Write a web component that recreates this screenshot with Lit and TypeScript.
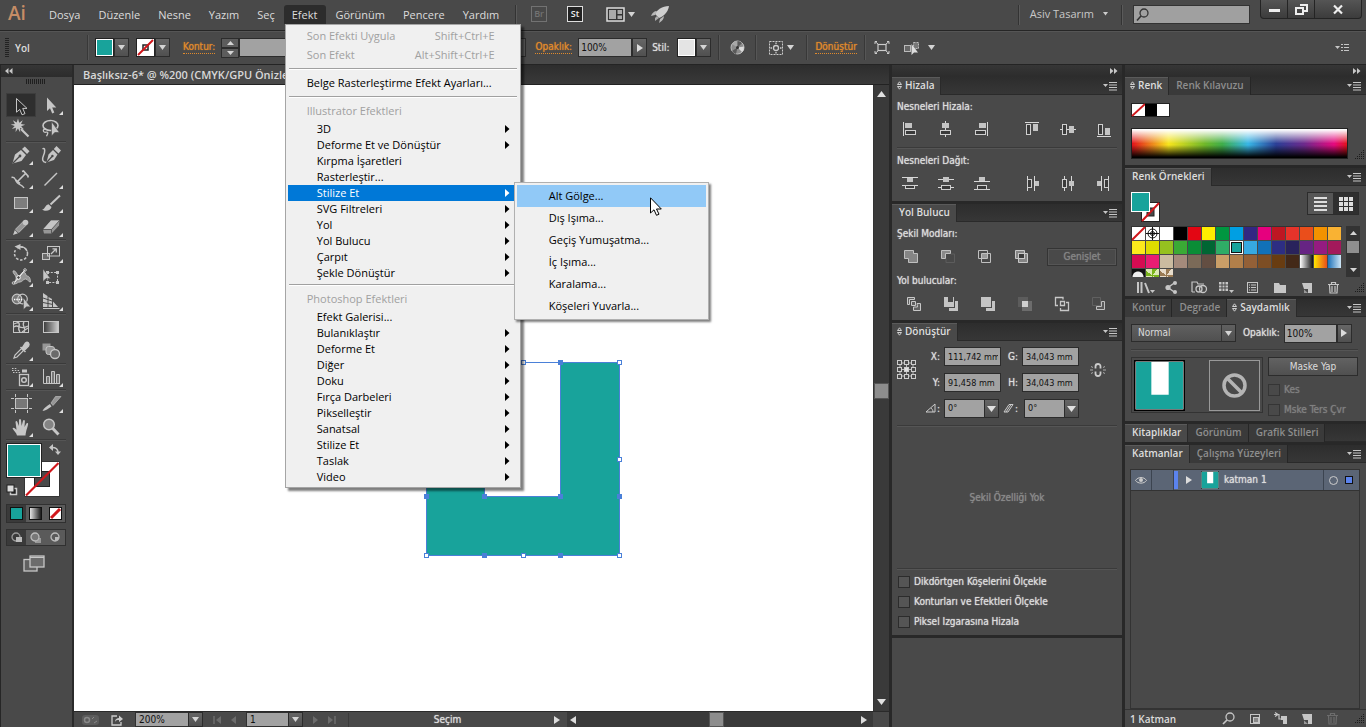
import { LitElement, html, svg, css, nothing, TemplateResult } from "lit";
import { customElement, property } from "lit/decorators.js";
import { classMap } from "lit/directives/class-map.js";

type Shape = TemplateResult | TemplateResult[];
const icon = (w: number, h: number, body: Shape) =>
  html`<svg class="ico" width=${w} height=${h} viewBox="0 0 ${w} ${h}" fill="none" stroke="none" aria-hidden="true">${body}</svg>`;

const L = "#c6c6c6";
const M = "#969696";
const TEAL = "#18a39b";

const down = () => icon(7, 5, svg`<path d="M0 0H7L3.5 5z" fill="#d4d4d4"/>`);
const up = () => icon(9, 6, svg`<path d="M0 6H9L4.5 0z" fill="#e0e0e0"/>`);
const downBig = () => icon(9, 6, svg`<path d="M0 0H9L4.5 6z" fill="#e0e0e0"/>`);
const right = () => icon(6, 8, svg`<path d="M0 0V8L6 4z" fill="#dcdcdc"/>`);
const left = () => icon(6, 8, svg`<path d="M6 0V8L0 4z" fill="#dcdcdc"/>`);
const menuArrow = () => icon(5, 8, svg`<path d="M0 0V8L4.5 4z" fill="currentColor"/>`);
const flyout = () =>
  icon(14, 9, svg`<path d="M0 2H5L2.5 5z" fill="${L}"/><path d="M6 .5H14M6 3H14M6 5.5H14M6 8H14" stroke="${L}"/>`);
const collapse = (dir: "l" | "r") =>
  dir === "l"
    ? icon(8, 6, svg`<path d="M3.5 0V6L0 3zM7.5 0V6L4 3z" fill="#c8c8c8"/>`)
    : icon(8, 6, svg`<path d="M0 0V6L3.5 3zM4 0V6L7.5 3z" fill="#c8c8c8"/>`);
const updown = () => icon(5, 9, svg`<path d="M.5 3.5L2.5 .8L4.5 3.5zM.5 5.5L2.5 8.2L4.5 5.5z" stroke="#d0d0d0"/>`);
const resizer = () =>
  icon(9, 9, svg`<path d="M8 .5h1M6 2.500h1m1 0h1M4 4.500h1m1 0h1m1 0h1M2 6.500h1m1 0h1m1 0h1m1 0h1M0 8.500h1m1 0h1m1 0h1m1 0h1m1 0h1" stroke="#1c1c1c"/>`);

/* ---- tool icons, 24 x 24 ---- */
const T: Record<string, Shape> = {
  select: svg`<path d="M7.5 4.5V18.2L10.8 15.4L13 20.8L16 19.6L13.7 14.4H18z" fill="#2b2b2b" stroke="${L}"/>`,
  direct: svg`<path d="M8 4.5V18L11 15.3L13.2 20.5L15.3 19.6L13.2 14.4H17.3z" fill="${L}"/>`,
  wand: svg`<path d="M9 1.5l1.2 4.2 3.6-2.4-1.8 3.8 4.2.6-4 1.6 2.8 3.2-4-1.4.2 4.4L9 11.4 6.6 15l.3-4.3-4 1.2 2.8-3-4-1.4 4.2-.6-2-3.6 3.8 2.3z" fill="${L}"/><path d="M12 12L19.5 19.5" stroke="${L}" stroke-width="2.2"/>`,
  lasso: svg`<ellipse cx="11.5" cy="8.5" rx="7.5" ry="5" stroke="${L}" stroke-width="1.6"/><path d="M7 12c-4-.5-3 4 0 3.2s1.500 2 .5 4" stroke="${L}" stroke-width="1.300"/><path d="M12.500 4.500V19l3.300-3.500h4.600z" fill="${L}" stroke="#484848" stroke-width=".6"/>`,
  pen: svg`<path d="M3.500 20.500L6 11.500L12 7L17 12L12.500 18z" fill="${L}"/><path d="M13 6L15.800 3.500L20.500 8.200L18 11z" fill="${L}"/><path d="M4 20L10.500 13.500" stroke="#484848" stroke-width="1.200"/><circle cx="11" cy="13" r="1.400" fill="#484848"/>`,
  curve: svg`<path d="M7.500 19.500L9.500 11.500L14 7L18.500 11.500L15 17z" fill="${L}"/><path d="M14.800 6L17.500 3L22 7.500L19.500 10.500z" fill="${L}"/><path d="M8 19L13 13.500" stroke="#484848" stroke-width="1.200"/><circle cx="13.400" cy="13" r="1.200" fill="#484848"/><path d="M3.500 6c3-2 2.500 3 1 6.500S3 19 7 19.500" stroke="${L}" stroke-width="1.500"/>`,
  type: svg`<path d="M2.500 10.500c4-1.500 3.500 3 6 5.500s4.500 1.500 6.500 5" stroke="${L}" stroke-width="1.400"/><path d="M8.500 14.500L16.500 6.500M13 4.500l1.500-.5L19 9v1.500M11 16.500l-4.500-3.500" stroke="${L}" stroke-width="1.700"/>`,
  line: svg`<path d="M5.500 18.500L18 6" stroke="${L}" stroke-width="1.500"/>`,
  rect: svg`<rect x="5.500" y="6.500" width="13" height="11" fill="#7d7d7d" stroke="${L}"/>`,
  brush: svg`<path d="M11.500 13.500L21 4.500" stroke="${L}" stroke-width="2"/><path d="M3 18.500c3 .2 3-4.500 6.500-5.200l3 2.700c-.5 3.500-6 5-9.500 2.500z" fill="${L}"/>`,
  pencil: svg`<path d="M4 20l1.800-5L9 18.300z" fill="${L}"/><path d="M6.500 14.200L14 6.700l3.300 3.300-7.500 7.500z" fill="${M}" stroke="${L}" stroke-width=".8"/><circle cx="16.500" cy="7.500" r="2.800" fill="${L}"/>`,
  eraser: svg`<path d="M4 14.500L12 5.500H20.500L20 10.500L12.500 18.500H5z" fill="${M}"/><path d="M4 14.500L12 5.500H20.500L12.500 14.500z" fill="${L}"/><path d="M4 14.500H12.500L20.500 5.500M12.500 14.500V18.500" stroke="#484848" stroke-width=".8"/>`,
  rotate: svg`<circle cx="12" cy="12.500" r="6.500" stroke="${L}" stroke-width="1.500" stroke-dasharray="2.600 1.600"/><path d="M5 8.500A7 7 0 0 1 12 6" stroke="#484848" stroke-width="3"/><path d="M10.500 6A6.600 6.600 0 0 1 18 10" stroke="${L}" stroke-width="1.500"/><path d="M5.500 5.500L11.500 3V9z" fill="${L}"/>`,
  scale: svg`<rect x="3.500" y="12.500" width="7" height="6" stroke="${L}" fill="#6a6a6a"/><rect x="8.500" y="5.500" width="12" height="9.500" stroke="${L}"/><path d="M12 13l5-5M13.500 7.800H17.300V11.500" stroke="${L}" stroke-width="1.300"/>`,
  width: svg`<path d="M4 6c3-1.500 4 5 6 5s2-4 4.500-4 2 4 3.500 4c2.500 0 3.500 3 3.500 6-2 .5-2.500-3-5-3s-3 3-5.500 3-3 2-6 2c0-3 3-4 2-7s-3-3-3-6z" fill="${M}" stroke="${L}" stroke-width=".8"/><path d="M5 18L16 5" stroke="#fff"/><circle cx="9.500" cy="12.500" r="1.800" fill="#484848" stroke="#fff"/><circle cx="16" cy="5" r="1.300" stroke="${L}"/><circle cx="4.500" cy="18" r="1.300" stroke="${L}"/>`,
  free: svg`<rect x="8.500" y="7.500" width="10" height="10" stroke="${L}" stroke-dasharray="2 1.300"/><path d="M7 6h3v3H7zM17 6h3v3h-3zM17 16h3v3h-3zM7 16h3v3H7z" fill="${L}"/><path d="M4 4V16.500l3-3h4.500z" fill="${L}" stroke="#484848" stroke-width=".5"/>`,
  shape: svg`<circle cx="8" cy="10" r="4.800" fill="#777" stroke="${L}" stroke-width="1.200"/><circle cx="13.500" cy="10" r="4.800" stroke="${L}" stroke-width="1.200"/><path d="M5 10.500H15" stroke="#fff" stroke-width="1.300" stroke-dasharray="1.300 1"/><path d="M14.500 9V20.500l3-2.700h4z" fill="${L}" stroke="#484848" stroke-width=".5"/>`,
  persp: svg`<path d="M4 4L8.500 7V18.500H4zM9.500 8L13 10V18.500H9.500zM14 12.500L19.500 18.500H14z" fill="${L}"/><path d="M4 9L13 12M4 13.500L14 15.500M4 18.500H20.500" stroke="#484848"/><path d="M4 19.500H20.500" stroke="${L}"/>`,
  mesh: svg`<rect x="4.500" y="6.500" width="15" height="11" stroke="${L}"/><path d="M5 12c4-4 6 4 14-1M9 7c4 3-2 6 2 10M15 7c-3 4 3 6 0 10M5 9l5-2M13 17l6-4" stroke="${L}" stroke-width="1.300"/>`,
  gradient: svg`<defs><linearGradient id="g"><stop offset="0" stop-color="#3a3a3a"/><stop offset="1" stop-color="#d0d0d0"/></linearGradient></defs><rect x="4.500" y="6.500" width="15" height="11" fill="url(#g)" stroke="${L}"/>`,
  dropper: svg`<path d="M5 19l1-3 6.500-6.500 2 2L8 18z" stroke="${L}" stroke-width="1.200"/><path d="M11.500 8L16.500 13M13 9.500L16.500 4c2-2 4.500.5 3 3l-4 4z" stroke="${L}" stroke-width="1.500" fill="${L}"/>`,
  blend: svg`<rect x="3.500" y="4.500" width="8" height="7" fill="${M}"/><rect x="7" y="7.500" width="8.500" height="8" rx="2.500" fill="${M}" stroke="#c6c6c6"/><circle cx="16" cy="15" r="4.500" fill="#6a6a6a" stroke="${L}" stroke-width="1.300"/>`,
  spray: svg`<rect x="10.500" y="9.500" width="9" height="11" stroke="${L}" stroke-width="1.300"/><rect x="13" y="4.500" width="5" height="3" fill="${L}"/><circle cx="15" cy="15" r="2.300" stroke="${L}" stroke-width="1.500"/><path d="M3 5.500h8M4 7.500h8M3 3.500h5" stroke="${L}" stroke-dasharray="1.500 1.300"/>`,
  graph: svg`<path d="M4.500 4V18.500H21" stroke="${L}"/><path d="M7.500 18V11.500h3V18M12.500 18V6.500h3V18M17.500 18V9.500h3V18" stroke="${L}" fill="#777"/>`,
  artboard: svg`<rect x="6.500" y="7.500" width="12" height="10" fill="#777" stroke="${L}"/><path d="M6.500 3V6M18.500 3V6M6.500 19V22M18.500 19V22M2 7.500H5M20 7.500h3M2 17.500H5M20 17.500h3" stroke="${L}"/>`,
  slice: svg`<path d="M3.500 20c1-3 4.500-5 7.500-7l1.500 2.500C9.500 17.500 6.500 20 3.500 20z" fill="${L}"/><path d="M12 12L16.500 5.500H22L14 14.500z" fill="${M}" stroke="${L}" stroke-width=".6"/>`,
  hand: svg`<path d="M8 20.500c-.5-3-3.500-4.500-4.500-7.200.8-1.200 2.200-.3 4 1.400L6.500 7c.2-1.200 1.500-1.200 1.900 0l1.500 4L10 5c.4-1.200 1.700-1.200 2 0l.6 6 1.400-5.300c.5-1 1.800-.8 1.900.3L15.500 12l2-3.500c.7-.8 1.800-.3 1.600.8-.8 4.200-2 5.500-2.600 11.200z" fill="${L}"/>`,
  zoom: svg`<circle cx="10" cy="9.500" r="5.300" fill="#848484" stroke="${L}" stroke-width="1.500"/><path d="M13.800 13.500L19.500 19.500" stroke="${L}" stroke-width="3"/>`,
};
const toolGroups: [string, string, boolean][][] = [
  [["select", "Seçim", false], ["direct", "Doğrudan Seçim", true], ["wand", "Sihirli Değnek", false], ["lasso", "Kement", false]],
  [["pen", "Kalem", true], ["curve", "Eğrilik", false], ["type", "Yazı", true], ["line", "Çizgi", true], ["rect", "Dikdörtgen", true], ["brush", "Boya Fırçası", true], ["pencil", "Kurşun Kalem", true], ["eraser", "Silgi", true]],
  [["rotate", "Döndür", true], ["scale", "Ölçekle", true], ["width", "Genişlik", true], ["free", "Serbest Dönüştür", false], ["shape", "Şekil Oluşturucu", true], ["persp", "Perspektif Izgara", true]],
  [["mesh", "Kafes", false], ["gradient", "Degrade", false], ["dropper", "Damlalık", true], ["blend", "Karışım", false]],
  [["spray", "Simge Püskürtücü", true], ["graph", "Sütun Grafik", true]],
  [["artboard", "Çalışma Yüzeyi", false], ["slice", "Dilim", true], ["hand", "El", true], ["zoom", "Yakınlaştır", false]],
];

/* ---- align and pathfinder icons, 16 x 16 ---- */
const box = (x: number, y: number, w: number, h: number) => svg`<rect x=${x + 0.5} y=${y + 0.5} width=${w - 1} height=${h - 1} fill="#3a3a3a" stroke="#cfcfcf"/>`;
const solid = (x: number, y: number, w: number, h: number, f = "#c4c4c4") => svg`<rect x=${x} y=${y} width=${w} height=${h} fill=${f}/>`;
const bar = (d: string) => svg`<path d=${d} stroke="#d8d8d8"/>`;
const alignIcons: Record<string, Shape> = {
  "Sola hizala": [bar("M1.500 1V15"), solid(3, 2, 7, 5), box(3, 9, 11, 5)],
  "Yatay ortala": [bar("M7.500 0V16"), solid(4, 2, 7, 5), box(2, 9, 11, 5)],
  "Sağa hizala": [bar("M13.500 1V15"), solid(5, 2, 7, 5), box(1, 9, 11, 5)],
  "Üste hizala": [bar("M1 1.500H15"), box(2, 3, 5, 11), solid(9, 3, 5, 7)],
  "Dikey ortala": [bar("M0 8.500H16"), box(2, 3, 5, 11), solid(9, 5, 5, 7)],
  "Alta hizala": [bar("M1 15.500H15"), box(2, 3, 5, 11), solid(9, 7, 5, 7)],
};
const distIcons: Record<string, Shape> = {
  "Üstten dağıt": [bar("M0 2.500H16M0 10.500H16"), solid(5, 3, 6, 4), box(3, 10, 10, 4)],
  "Dikey dağıt": [bar("M0 4.500H16M0 12.500H16"), solid(5, 2, 6, 5), box(3, 10, 10, 5)],
  "Alttan dağıt": [bar("M0 6.500H16M0 14.500H16"), solid(5, 2, 6, 4), box(3, 10, 10, 5)],
  "Soldan dağıt": [bar("M3.500 1V16M10.500 1V16"), box(3, 4, 5, 9), solid(11, 6, 4, 5)],
  "Yatay dağıt": [bar("M4.500 1V16M11.500 1V16"), box(2, 4, 5, 9), solid(9, 6, 5, 5)],
  "Sağdan dağıt": [bar("M5.500 1V16M12.500 1V16"), solid(1, 6, 4, 5), box(8, 4, 5, 9)],
};
const pfIcons: Record<string, Shape> = {
  "Birleştir": svg`<path d="M1.500 1.500h9v3h4v9h-9v-4h-4z" fill="#858585" stroke="#c0c0c0"/>`,
  "Ön tarafı çıkar": svg`<path d="M1.500 1.500h9v3h-5v5h-4z" fill="#8a8a8a" stroke="#c0c0c0"/><path d="M11 5h3.500v8.500H6V10" stroke="#5c5c5c"/>`,
  "Kesişim": svg`<path d="M1.500 1.500h9v8h-9zM4.500 4.500h9v9h-9z" stroke="#c0c0c0"/><rect x="5" y="5" width="5" height="4" fill="#9a9a9a"/>`,
  "Dışla": svg`<path d="M1.500 1.500h9v8h-9zM4.500 4.500h9v9h-9z" fill="#858585" stroke="#c8c8c8"/><rect x="4.500" y="4.500" width="6" height="5" fill="#3a3a3a" stroke="#c8c8c8"/>`,
};
const pfIcons2: Record<string, Shape> = {
  "Böl": svg`<path d="M1.500 1.500h7v2h-5v5h-2zM5.500 5.500h4v4h-4zM11 7.500h3.500v7h-7V11h4z" fill="#606060" stroke="#c8c8c8"/>`,
  "Kırp": svg`<path d="M1 1h4v5h5V1h1v10H1zM12 5h3v10H6v-3h6z" fill="#c4c4c4"/>`,
  "Kaynaştır": svg`<path d="M1 1h10v10H1zM12 5h3v10H6v-3h6z" fill="#c4c4c4"/>`,
  "Kesme": svg`<path d="M1 1h10v10H1z" fill="#5c5c5c"/><path d="M5 5h10v10H5z" fill="#6c6c6c"/><path d="M5 5h6v6H5z" fill="#d0d0d0"/>`,
  "Anahat": svg`<path d="M9 3.500V1.500H1.500V9.500H4M6.500 5.500h4v4h-4zM12 6.500h2.500v8h-8V12" stroke="#c8c8c8" stroke-width="1.300"/>`,
  "Alt eksi": svg`<path d="M1.500 1.500h8v8h-8z" stroke="#606060"/><path d="M10.500 5.500h3v8h-8v-3h5z" fill="#585858" stroke="#c0c0c0"/>`,
};

const effectItems = ["3D>", "Deforme Et ve Dönüştür>", "Kırpma İşaretleri", "Rasterleştir...", "Stilize Et>", "SVG Filtreleri>", "Yol>", "Yol Bulucu>", "Çarpıt>", "Şekle Dönüştür>"];
const psItems = ["Efekt Galerisi...", "Bulanıklaştır>", "Deforme Et>", "Diğer>", "Doku>", "Fırça Darbeleri>", "Pikselleştir>", "Sanatsal>", "Stilize Et>", "Taslak>", "Video>"];
const subItems = ["Alt Gölge...", "Dış Işıma...", "Geçiş Yumuşatma...", "İç Işıma...", "Karalama...", "Köşeleri Yuvarla..."];

const swatches = [
  "none", "reg", "#ffffff", "#000000", "#e30613", "#ffed00", "#009640", "#009fe3", "#312783", "#e6007e", "#be1622", "#e6332a", "#ea4e1b", "#f39200", "#f9b233",
  "#fcea1c", "#dedc00", "#95c11f", "#3aaa35", "#0a8d36", "#006633", "#2fac66", TEAL, "#36a9e1", "#1171b8", "#2d2e83", "#29235c", "#662483", "#951b81", "#a3195b",
  "#d60b52", "#e71d73", "#cbbba0", "#a48a7b", "#7b6a58", "#634e42", "#ca9e67", "#b17f4a", "#936037", "#7d4e24", "#683c11", "#432918", "bw", "sun", "sky",
  "dots", "leaf", "sand",
];

const reset = css`
  * { box-sizing: border-box; }
  button, input, select { font: inherit; color: inherit; margin: 0; padding: 0; border: 0; border-radius: 0; background: none; }
  button { display: inline-flex; align-items: center; justify-content: center; flex: none; }
  a { color: inherit; text-decoration: none; }
  ul { list-style: none; margin: 0; padding: 0; }
  .ico { display: block; flex: none; overflow: visible; }
`;
const fields = css`
  .field { height: 19px; min-width: 0; background: #a2a2a2; color: #111; border: 1px solid #2c2c2c; padding: 0 4px; font: 10px/17px "DejaVu Sans Condensed", sans-serif; }
  .sw { width: 19px; height: 19px; border: 1px solid #222; box-shadow: inset 0 0 0 1px #fff; }
  .dd { width: 15px; height: 19px; background: linear-gradient(#666, #505050); border: 1px solid #2c2c2c; }
  .pick { display: inline-grid; grid-template-columns: 1fr 15px; flex: none; }
  .pick select { grid-area: 1 / 1 / 2 / 3; appearance: none; width: 100%; }
  .pick .cap { grid-area: 1 / 2; pointer-events: none; display: flex; align-items: center; justify-content: center; background: linear-gradient(#666, #505050); border: 1px solid #2c2c2c; }
  .tah { font: 10px/14px "DejaVu Sans Condensed", sans-serif; text-shadow: 0 0 1px currentColor; color: #dcdcdc; }
`;
const noneMark = () => html`<svg class="ico" width="19" height="19" viewBox="0 0 19 19" aria-hidden="true"><rect width="19" height="19" fill="#222"/><rect x="1" y="1" width="17" height="17" fill="#fff"/><rect x="7" y="7" width="5" height="5" fill="#fff" stroke="#222" stroke-width="1.500"/><path d="M2 17L17 2" stroke="#d0161b" stroke-width="2"/></svg>`;

@customElement("effect-menu")
class EffectMenu extends LitElement {
  static styles = [reset, css`
    :host { display: block; font: 11px/16px "Open Sans", sans-serif; color: #000; }
    .menu { background: #f0f0f0; border: 1px solid #a5a5a5; padding: 2px; box-shadow: 3px 3px 2px rgba(0, 0, 0, .5); width: 236px; }
    .row { display: flex; align-items: center; height: 19px; padding: 0 23px 2px 19px; white-space: nowrap; }
    .row button { flex: 1; justify-content: space-between; height: 100%; }
    .off { color: #a0a0a0; }
    .item { position: relative; height: 16px; padding: 0 8px 0 29px; }
    .on { background: #0078d7; color: #fff; }
    .sep { height: 2px; margin: 3px 1px 4px; border-top: 1px solid #a0a0a0; background: #fff; }
    .sub { position: absolute; left: calc(100% - 4px); top: -3px; width: 195px; color: #000; background: #f0f0f0; border: 1px solid #b0b0b0; padding: 2px; box-shadow: 2px 2px 2px rgba(0, 0, 0, .5); }
    .leaf { display: flex; height: 22px; padding-left: 32px; }
    .leaf button { flex: 1; justify-content: flex-start; }
    .hot { background: #91c9f7; }
  `];
  private item = (label: string, open = false) => html`<li class=${classMap({ row: true, item: true, on: open })} role="none">
      <button role="menuitem">${label.replace(">", "")}${label.endsWith(">") ? menuArrow() : nothing}</button>
      ${open ? html`<ul class="sub" role="menu">${subItems.map((s, i) => html`<li class=${classMap({ leaf: true, hot: i === 0 })} role="none"><button role="menuitem">${s}</button></li>`)}</ul>` : nothing}
    </li>`;
  render() {
    return html`<ul class="menu" role="menu">
      <li class="row off"><button role="menuitem" disabled class="off"><span>Son Efekti Uygula</span><span>Shift+Ctrl+E</span></button></li>
      <li class="row off"><button role="menuitem" disabled class="off"><span>Son Efekt</span><span>Alt+Shift+Ctrl+E</span></button></li>
      <li class="sep" role="separator"></li>
      <li class="row"><button role="menuitem">Belge Rasterleştirme Efekt Ayarları...</button></li>
      <li class="sep" role="separator"></li>
      <li class="row off">Illustrator Efektleri</li>
      ${effectItems.map((t, i) => this.item(t, i === 4))}
      <li class="sep" role="separator"></li>
      <li class="row off">Photoshop Efektleri</li>
      ${psItems.map((t) => this.item(t))}
    </ul>`;
  }
}

@customElement("title-bar")
class TitleBar extends LitElement {
  static styles = [reset, css`
    :host { display: flex; height: 30px; background: #494949; color: #dcdcdc; font: 11px/18px "Open Sans", sans-serif; }
    .logo { width: 40px; padding-left: 8px; font: 600 19px/27px "Open Sans", sans-serif; color: #c68d66; }
    .menus { display: flex; padding-top: 5px; height: 24px; margin-right: 7px; }
    .top { position: relative; }
    .top > button { height: 19px; padding: 0 9px; }
    .open > button { background: #2c2c2c; border-radius: 3px 3px 0 0; padding: 0 9px 0 8px; }
    .drop { position: absolute; z-index: 5; left: 1px; top: 19px; }
    .rule { width: 1px; height: 20px; margin-top: 5px; background: #333; box-shadow: 1px 0 #5a5a5a; flex: none; }
    .apps { display: flex; align-items: center; height: 28px; padding-left: 15px; }
    .app { width: 16px; height: 16px; border: 1px solid #727272; color: #727272; font: 600 9px/12px "Open Sans", sans-serif; margin-right: 20px; }
    .st { color: #eee; border-color: #ddd; background: #222; margin-right: 23px; }
    .arr { display: flex; gap: 3px; align-items: center; margin-right: 16px; }
    .end { margin-left: auto; display: flex; }
    .user { display: flex; align-items: center; height: 28px; gap: 9px; padding: 0 13px 0 11px; color: #c8c8c8; }
    .find { display: flex; align-items: center; width: 117px; height: 19px; margin: 5px 10px 0 11px; background: #a0a0a0; border: 1px solid #333; padding-left: 2px; }
    .find input { min-width: 0; flex: 1; height: 17px; outline: none; }
    .win { display: flex; height: 19px; margin-right: 4px; background: linear-gradient(#555, #3c3c3c); border: 1px solid #242424; border-top: 0; border-radius: 0 0 4px 4px; }
    .win button { width: 27px; border-right: 1px solid #242424; }
    .win button:last-child { width: 46px; border-right: 0; }
  `];
  render() {
    const names = ["Dosya", "Düzenle", "Nesne", "Yazım", "Seç", "Efekt", "Görünüm", "Pencere", "Yardım"];
    return html`
      <div class="logo">Ai</div>
      <nav class="menus" aria-label="Menü">${names.map((n) => html`<div class=${classMap({ top: true, open: n === "Efekt" })}>
        <button>${n}</button>${n === "Efekt" ? html`<effect-menu class="drop"></effect-menu>` : nothing}</div>`)}</nav>
      <span class="rule"></span>
      <div class="apps">
        <button class="app">Br</button><button class="app st">St</button>
        <button class="arr" aria-label="Belgeleri düzenle">${icon(19, 15, svg`<rect x="1" y="1" width="17" height="13" fill="#333" stroke="#ddd" stroke-width="1.500"/><path d="M3 3h7v9H3zM11.500 3H16v4h-4.500zM11.500 8.500H16V12h-4.500z" fill="#aaa"/>`)}${down()}</button>
        <button aria-label="GPU performansı">${icon(18, 17, svg`<path d="M18 0C11 0 6 4 4 8l4 4c5-2 9-6 10-12z" fill="#cfcfcf"/><path d="M6 5C3 5 1 7 0 10l4-1zM13 10c0 3-2 5-5 7l1-4z" fill="#b8b8b8"/><path d="M4 12l2-2 2 2-4 3z" fill="#aaa"/>`)}</button>
      </div>
      <div class="end">
        <span class="rule"></span>
        <button class="user">Asiv Tasarım ${icon(5, 4, svg`<path d="M0 0H5L2.500 3.500z" fill="#ccc"/>`)}</button>
        <span class="rule"></span>
        <label class="find" aria-label="Ara">${icon(14, 14, svg`<circle cx="8" cy="5" r="4" stroke="#333" stroke-width="1.300"/><path d="M5 8L1 12.500" stroke="#333" stroke-width="1.600"/>`)}<input type="search" aria-label="Ara" /></label>
        <div class="win">
          <button aria-label="Küçült">${icon(11, 3, svg`<path d="M0 2.500H11" stroke="#eee" stroke-width="3"/>`)}</button>
          <button aria-label="Geri yükle">${icon(13, 11, svg`<path d="M5 1h7v6H9" stroke="#eee" stroke-width="2"/><rect x="1" y="4" width="7" height="6" stroke="#eee" stroke-width="2"/>`)}</button>
          <button aria-label="Kapat">${icon(10, 9, svg`<path d="M1 .5L9 8.500M9 .5L1 8.500" stroke="#eee" stroke-width="2.200"/>`)}</button>
        </div>
      </div>`;
  }
}

@customElement("control-bar")
class ControlBar extends LitElement {
  static styles = [reset, fields, css`
    :host { display: flex; align-items: center; height: 35px; padding: 0 17px 0 5px; background: #494949; border-top: 1px solid #262626; border-bottom: 1px solid #242424; box-shadow: inset 0 1px #555; }
    .grip { width: 4px; height: 20px; background: repeating-linear-gradient(#222 0 1px, #494949 1px 2px); }
    .kind { width: 78px; padding-left: 6px; font: 600 10px/14px "Open Sans", sans-serif; text-shadow: none; }
    .rule { width: 1px; height: 25px; background: #383838; box-shadow: 1px 0 #565656; flex: none; }
    .pair { display: flex; margin-left: 7px; }
    .link { color: #e08a2c; border-bottom: 1px dotted #e08a2c; line-height: 12px; white-space: nowrap; }
    .stroke { margin-left: 13px; }
    .step { display: flex; flex-direction: column; margin-left: 6px; }
    .step button { width: 18px; height: 10px; background: #5c5c5c; border: 1px solid #2c2c2c; }
    .weight { width: 60px; }
    .prof { width: 98px; height: 19px; margin-left: 8px; background: #5a5a5a; border: 1px solid #2c2c2c; }
    .opac { margin-left: 9px; }
    .pct { width: 54px; margin-left: 6px; padding: 0 2px; }
    .stil { margin: 0 8px 0 5px; }
    .plain { background: #e4e4e4; }
    .wheel { margin: 0 10px 0 11px; }
    .sim { margin: 0 12px 0 13px; gap: 4px; }
    .tr { margin: 0 7px 0 8px; }
    .iso { margin: 0 15px 0 10px; }
    .pic { gap: 8px; }
    .fly { margin-left: auto; }
  `];
  render() {
    return html`
      <span class="grip"></span><span class="tah kind">Yol</span><span class="rule"></span>
      <span class="pair"><button class="sw" style="background:${TEAL}" aria-label="Dolgu"></button><button class="dd" aria-label="Dolgu listesi">${down()}</button></span>
      <span class="pair"><button aria-label="Kontur rengi">${noneMark()}</button><button class="dd" aria-label="Kontur listesi">${down()}</button></span>
      <a class="tah link stroke" href="#">Kontur:</a>
      <span class="step"><button aria-label="Artır">${down4("u")}</button><button aria-label="Azalt">${down4("d")}</button></span>
      <input class="field weight" aria-label="Kontur kalınlığı" /><button class="dd" aria-label="Kalınlıklar">${down()}</button>
      <button class="prof" aria-label="Değişken genişlik"></button><button class="prof" aria-label="Fırça tanımı"></button>
      <a class="tah link opac" href="#">Opaklık:</a>
      <input class="field pct" value="100%" aria-label="Opaklık" /><button class="dd" aria-label="Opaklık kaydırıcısı">${right()}</button>
      <span class="tah stil">Stil:</span><button class="sw plain" aria-label="Stil"></button><button class="dd" aria-label="Stiller">${down()}</button>
      <span class="rule pair"></span>
      <button class="wheel" aria-label="Yeniden renklendir">${icon(15, 15, svg`<circle cx="7.500" cy="7.500" r="6.500" fill="#8d8d8d" stroke="#bdbdbd"/><path d="M7.500 7.500V1A6.500 6.500 0 0 0 2 4z" fill="#a8a8a8"/><path d="M7.500 7.500L14 6.500A6.500 6.500 0 0 1 12 12z" fill="#dcdcdc"/><path d="M7.500 7.500L2 11a6.500 6.500 0 0 0 4 3zM7.500 7.500V1A6.500 6.500 0 0 1 12 3z" fill="#5a5a5a"/><circle cx="7.500" cy="7.500" r="1.500" fill="#333"/>`)}</button>
      <span class="rule"></span>
      <button class="sim" aria-label="Tuvale hizala">${icon(14, 14, svg`<rect x=".5" y=".5" width="13" height="13" stroke="#ccc" stroke-dasharray="2 1"/><circle cx="7" cy="7" r="2.500" stroke="#ccc" stroke-width="1.300"/><path d="M7 1.500V3M7 11v1.500M1.500 7H3M11 7h1.500" stroke="#ccc" stroke-width="1.300"/>`)}${down()}</button>
      <span class="rule"></span>
      <a class="tah link tr" href="#">Dönüştür</a>
      <span class="rule"></span>
      <button class="iso" aria-label="Yalıt">${icon(14, 13, svg`<rect x="3" y="3.500" width="8" height="6" stroke="#ccc" stroke-width="1.200"/><path d="M0 .5L3 3M14 .5L11 3M0 12.500L3 10M14 12.500L11 10M0 3V.5H2M12 .5h2V3M0 10v2.500h2M12 12.500h2V10" stroke="#ccc"/>`)}</button>
      <button class="pic" aria-label="Benzer nesneleri seç">${icon(16, 14, svg`<rect x=".5" y="4.500" width="6" height="6" fill="#666" stroke="#bbb"/><rect x="9.500" y="1.500" width="5" height="6" fill="#777" stroke="#bbb" stroke-dasharray="2 1"/><path d="M7.500 3V14l2.500-2.500H14z" fill="#ddd"/>`)}${down()}</button>
      <button class="fly" aria-label="Panel menüsü">${icon(14, 9, svg`<path d="M0 3H5L2.500 6z" fill="${L}"/><path d="M6 1.500H8M9 1.500h5M6 4.500H8M9 4.500h5M6 7.500H8M9 7.500h5" stroke="${L}"/>`)}</button>`;
  }
}
function down4(d: "u" | "d") {
  return icon(7, 4, d === "u" ? svg`<path d="M0 4H7L3.500 0z" fill="#d4d4d4"/>` : svg`<path d="M0 0H7L3.500 4z" fill="#d4d4d4"/>`);
}

@customElement("tool-box")
class ToolBox extends LitElement {
  static styles = [reset, css`
    :host { display: block; background: #494949; border-left: 1px solid #262626; border-right: 2px solid #2a2a2a; }
    .strip { height: 12px; padding: 3px 4px; background: linear-gradient(#363636, #2c2c2c); }
    .grip { width: 20px; height: 5px; margin: 2px 0 9px 25px; background: repeating-linear-gradient(90deg, #1f1f1f 0 1px, #494949 1px 2px); }
    .group { display: grid; grid-template-columns: repeat(2, 30px); width: 60px; margin: 0 0 1px 5px; border-bottom: 1px solid #3a3a3a; box-shadow: 0 1px #555; }
    .tool { width: 30px; height: 24px; display: grid; grid-template-columns: 3px 24px 3px; }
    .tool .ico { grid-area: 1 / 2; }
    .tool .more { grid-area: 1 / 2; align-self: end; justify-self: end; margin-bottom: 2px; }
    .active { background: #2e2e2e; width: 28px; height: 22px; margin: 1px; box-shadow: 0 0 0 1px #3d3d3d; grid-template-columns: 2px 24px 2px; }
    .paint { margin: 2px 0 6px 5px; }
    .modes { display: grid; grid-template-columns: repeat(3, 1fr); width: 60px; height: 19px; margin: 0 0 6px 5px; background: #5a5a5a; border: 1px solid #303030; }
    .modes.low { height: 17px; margin-bottom: 9px; }
    .modes button:first-child { background: #3a3a3a; }
    .screen { margin-left: 22px; }
  `];
  render() {
    return html`
      <div class="strip">${collapse("l")}</div><div class="grip"></div>
      ${toolGroups.map((g) => html`<div class="group">${g.map(([k, label, more]) => html`
        <button class=${classMap({ tool: true, active: k === "select" })} aria-label=${label}>${icon(24, 24, T[k])}${more ? html`<svg class="ico more" width="4" height="4" viewBox="0 0 4 4" aria-hidden="true"><path d="M4 0V4H0z" fill="#ddd"/></svg>` : nothing}</button>`)}</div>`)}
      <button class="paint" aria-label="Dolgu ve kontur">${icon(60, 55, svg`
        <rect x="18.500" y="18.500" width="35" height="35" fill="#222"/><rect x="19" y="19" width="34" height="34" fill="#fff"/><rect x="28.500" y="28.500" width="15" height="15" fill="#494949" stroke="#222"/><path d="M20 52.500L52.500 20" stroke="#d0161b" stroke-width="2.200"/>
        <rect width="36" height="35" fill="#222"/><rect x="1" y="1" width="34" height="33" fill="#fff"/><rect x="2" y="2" width="32" height="31" fill="${TEAL}"/>
        <path d="M46 4.500c4 0 6 1.500 6 5" stroke="${L}" stroke-width="1.500"/><path d="M43 4.500L47 1V8zM49 8.500h6L52 12z" fill="${L}"/>
        <rect x="4.500" y="45.500" width="6" height="6" fill="#222" stroke="#ccc" stroke-width="1.500"/><rect x="1" y="42" width="7" height="7" fill="#ddd" stroke="#222"/>`)}</button>
      <div class="modes">
        <button aria-label="Renk">${icon(13, 13, svg`<rect x=".5" y=".5" width="12" height="12" fill="${TEAL}" stroke="#111"/>`)}</button>
        <button aria-label="Degrade">${icon(13, 13, svg`<defs><linearGradient id="m"><stop offset="0" stop-color="#eee"/><stop offset="1" stop-color="#111"/></linearGradient></defs><rect x=".5" y=".5" width="12" height="12" fill="url(#m)" stroke="#111"/>`)}</button>
        <button aria-label="Yok">${icon(13, 13, svg`<rect x=".5" y=".5" width="12" height="12" fill="#fff" stroke="#111"/><path d="M2 11L11 2" stroke="#d0161b" stroke-width="3"/>`)}</button>
      </div>
      <div class="modes low">
        <button aria-label="Normal çiz">${icon(11, 11, svg`<circle cx="5" cy="5" r="4" stroke="#999" stroke-width="1.300"/><rect x="5" y="5" width="6" height="5" fill="#bbb"/>`)}</button>
        <button aria-label="Arkaya çiz">${icon(11, 11, svg`<rect x="5" y="6" width="6" height="5" fill="#999"/><circle cx="5" cy="5" r="4" fill="#777" stroke="#bbb" stroke-width="1.300"/>`)}</button>
        <button aria-label="İçe çiz">${icon(11, 11, svg`<circle cx="5" cy="5" r="4" stroke="#bbb" stroke-width="1.300"/><path d="M5 5h4a4 4 0 0 1-4 4z" fill="#bbb"/>`)}</button>
      </div>
      <button class="screen" aria-label="Ekran modu">${icon(22, 17, svg`<rect x="1" y="4.500" width="13" height="11.500" fill="#606060" stroke="${L}" stroke-width="1.300"/><rect x="7" y="1" width="14" height="11" fill="#6c6c6c" stroke="${L}" stroke-width="1.300"/><path d="M7 2.500H21" stroke="${L}"/>`)}</button>`;
  }
}

@customElement("document-view")
class DocumentView extends LitElement {
  static styles = [reset, fields, css`
    :host { display: grid; grid-template: 20px minmax(0, 1fr) 16px / minmax(0, 1fr) 16px; background: #494949; }
    .tabs { grid-column: 1 / 3; background: linear-gradient(#2d2d2d, #393939); border-bottom: 1px solid #222; }
    .tab { width: 360px; max-width: 100%; height: 19px; padding-left: 9px; background: #494949; color: #d8d8d8; font: 600 11px/19px "Open Sans", sans-serif; }
    .canvas { position: relative; overflow: hidden; background: #fff; }
    .art { position: absolute; left: 345px; top: 270px; }
    .vs { display: flex; flex-direction: column; align-items: center; justify-content: space-between; padding: 6px 0; background: #3a3a3a; border-left: 1px solid #333; }
    .vt { width: 15px; height: 16px; background: #8d8d8d; margin-bottom: 14px; border: 1px solid #555; }
    .status { display: flex; align-items: center; background: #494949; border-top: 1px solid #2a2a2a; grid-column: 1 / 3; overflow: hidden; }
    .zoom { width: 68px; }
    .page { width: 57px; }
    .st { color: #111; background: #a2a2a2; border: 1px solid #303030; height: 15px; padding-left: 3px; font: 10px/14px "DejaVu Sans Condensed", sans-serif; }
    .cap { height: 15px; }
    .cloud { margin: 0 11px 0 7px; }
    .share { margin-right: 12px; }
    .nav { display: flex; gap: 10px; padding: 0 10px; }
    .mode { flex: none; width: 198px; text-align: center; border-left: 1px solid #3a3a3a; margin: 0 8px 0 2px; }
    .hs { flex: 1; display: flex; align-items: center; justify-content: space-between; height: 15px; margin-left: 7px; margin-right: 16px; padding: 0 6px 0 3px; background: #3a3a3a; }
    .ht { width: 15px; height: 15px; background: #8d8d8d; border: 1px solid #555; margin-right: 5px; }
  `];
  render() {
    const hollow = [[97, 0], [193, 0], [193, 97], [193, 193], [97, 193], [0, 193], [0, 0], [0, 97]];
    const full = [[134, 0], [193, 134], [134, 193], [58, 193], [0, 134], [58, 134], [134, 134], [58, 0]];
    const dim = "#6c6c6c";
    return html`
      <div class="tabs"><div class="tab">Başlıksız-6* @ %200 (CMYK/GPU Önizle</div></div>
      <div class="canvas"><svg class="ico art" width="210" height="210" viewBox="-7.500 -7.500 210 210" role="img" aria-label="Çizim">
        <path d="M0 0H58V134H134V0H193V193H0z" fill="${TEAL}" stroke="#4a80d8"/><path d="M0 0H193" stroke="#4a80d8" />
        ${hollow.map(([x, y]) => svg`<rect x=${x - 2} y=${y - 2} width="4" height="4" fill="#fff" stroke="#4a80d8"/>`)}
        ${full.map(([x, y]) => svg`<rect x=${x - 2} y=${y - 2} width="4" height="4" fill="#4a80d8" stroke="#4a80d8"/>`)}
      </svg></div>
      <div class="vs">${up()}<span class="vt"></span>${downBig()}</div>
      <div class="status">
        <span class="cloud">${icon(19, 12, svg`<rect x="1" y="1" width="17" height="10" rx="3" fill="#5c5c5c"/><circle cx="6" cy="6" r="2.500" stroke="#888" stroke-width="1.500"/><path d="M11 5l2-2M13 9l3-2" stroke="#888"/>`)}</span>
        <button class="share" aria-label="Paylaş">${icon(12, 12, svg`<path d="M6 2H1v9h9V8" stroke="#ccc" stroke-width="1.300"/><path d="M4 8c0-3 2-4 4-4V1.500L12 5 8 8V6c-2 0-3 0-4 2z" fill="#ccc"/>`)}</button>
        <span class="pick zoom"><select class="st" aria-label="Yakınlaştırma"><option>200%</option></select><span class="cap">${down()}</span></span>
        <span class="nav">${icon(8, 8, svg`<path d="M1 0V8" stroke="${dim}" stroke-width="1.500"/><path d="M8 0V8L3 4z" fill="${dim}"/>`)}${icon(5, 8, svg`<path d="M5 0V8L0 4z" fill="${dim}"/>`)}</span>
        <span class="pick page"><select class="st" aria-label="Çalışma yüzeyi"><option>1</option></select><span class="cap">${down()}</span></span>
        <span class="nav">${icon(5, 8, svg`<path d="M0 0V8L5 4z" fill="${dim}"/>`)}${icon(8, 8, svg`<path d="M7 0V8" stroke="${dim}" stroke-width="1.500"/><path d="M0 0V8L5 4z" fill="${dim}"/>`)}</span>
        <span class="tah mode">Seçim</span>
        <button aria-label="Durum menüsü">${right()}</button>
        <div class="hs">${left()}<span class="ht"></span>${right()}</div>
      </div>`;
  }
}

@customElement("panel-tabs")
class PanelTabs extends LitElement {
  @property({ attribute: false }) names: string[] = [];
  @property({ type: Number }) active = 0;
  @property({ type: Boolean }) arrow = false;
  @property({ type: Boolean }) nomenu = false;
  static styles = [reset, css`
    :host { display: flex; height: 18px; background: linear-gradient(#2d2d2d, #373737); box-shadow: inset 0 -1px #2a2a2a; }
    .tab { gap: 3px; height: 18px; padding: 0 6px 1px 7px; font: 600 10px/17px "Open Sans", sans-serif; color: #8e8e8e; background: #3a3a3a; border-right: 1px solid #262626; }
    .cur { background: #494949; color: #dedede; border-right-color: #2a2a2a; box-shadow: inset 0 1px #5a5a5a; }
    .fly { margin: 0 5px 0 auto; }
    .arr { padding-left: 5px; }
  `];
  render() {
    return html`${this.names.map((n, i) => html`<button role="tab" class=${classMap({ tab: true, cur: i === this.active, arr: i === this.active && this.arrow })}>${i === this.active && this.arrow ? updown() : nothing}${n}</button>`)}
      ${this.nomenu ? nothing : html`<button class="fly" aria-label="Panel menüsü">${flyout()}</button>`}`;
  }
}

@customElement("dock-left")
class DockLeft extends LitElement {
  static styles = [reset, fields, css`
    :host { display: flex; flex-direction: column; background: #494949; border-left: 3px solid #282828; border-right: 3px solid #282828; }
    .strip { height: 12px; flex: none; padding: 3px 4px; background: linear-gradient(#363636, #2c2c2c); display: flex; justify-content: flex-end; }
    .panel { border-bottom: 3px solid #282828; }
    .title { padding: 5px 5px 0; height: 22px; }
    .six { display: grid; grid-template-columns: repeat(3, 36px) 14px repeat(3, 36px); height: 24px; margin-bottom: 6px; }
    .six button:nth-child(4) { grid-column: 5; }
    .line { margin: 0 5px; height: 1px; background: #3a3a3a; box-shadow: 0 1px #555; }
    .align .line { margin-bottom: 1px; }
    .modes { display: flex; align-items: center; height: 25px; }
    .modes button { width: 37px; }
    .modes .expand { width: 70px; height: 18px; margin-left: auto; margin-right: 5px; border: 1px solid #343434; color: #858585; box-shadow: inset 0 0 0 1px #555; }
    .finders { display: grid; grid-template-columns: repeat(6, 37px); height: 26px; margin: 0 0 3px 3px; }
    .xf { display: grid; grid-template-columns: 20px 27px 57px 21px 57px 1fr; row-gap: 7px; padding: 6px 6px 7px 5px; align-items: center; }
    .ref { grid-area: 1 / 1 / 3 / 2; }
    .chain { grid-area: 1 / 6 / 3 / 7; justify-self: center; }
    .xf .lab { justify-self: end; padding-right: 4px; display: flex; align-items: center; gap: 1px; }
    .xf .c2 { grid-column: 2; }
    .xf .field { width: 57px; padding: 0 2px 0 3px; font-size: 9px; }
    .xf .pick, .xf .pick .field { width: 55px; }
    .xf .r { justify-self: end; }
    .empty { height: 142px; padding-top: 65px; text-align: center; color: #8a8a8a; }
    .checks { padding: 3px 6px 3px; display: grid; }
    .check { display: flex; align-items: center; height: 20px; gap: 4px; }
    .check input { appearance: none; width: 12px; height: 12px; background: #555; border: 1px solid #2c2c2c; }
  `];
  render() {
    const btns = (set: Record<string, Shape>, s = 16) => Object.entries(set).map(([k, v]) => html`<button aria-label=${k}>${icon(s, s, v)}</button>`);
    const ref = [1, 8, 15].flatMap((y) => [1, 8, 15].map((x) => [x, y]));
    return html`
      <div class="strip">${collapse("r")}</div>
      <section class="panel"><panel-tabs .names=${["Hizala"]} arrow></panel-tabs>
        <div class="align">
          <div class="tah title">Nesneleri Hizala:</div><div class="six">${btns(alignIcons)}</div>
          <div class="line"></div>
          <div class="tah title">Nesneleri Dağıt:</div><div class="six">${btns(distIcons)}</div>
        </div>
      </section>
      <section class="panel"><panel-tabs .names=${["Yol Bulucu"]}></panel-tabs>
        <div class="tah title">Şekil Modları:</div>
        <div class="modes">${btns(pfIcons)}<button class="tah expand" disabled>Genişlet</button></div>
        <div class="tah title">Yol bulucular:</div>
        <div class="finders">${btns(pfIcons2)}</div>
      </section>
      <section class="panel"><panel-tabs .names=${["Dönüştür"]} arrow></panel-tabs>
        <div class="xf tah">
          <span class="ref">${icon(19, 19, svg`<path d="M3 3H16V16H3zM3 9.500H16M9.500 3V16" stroke="#bbb"/>${ref.map(([x, y]) => svg`<rect x=${x - 0.5} y=${y - 0.5} width="4" height="4" fill=${x === 8 && y === 8 ? "#ddd" : "#494949"} stroke="#ccc"/>`)}`)}</span>
          <label class="lab" for="x">X:</label><input class="field" id="x" value="111,742 mm" />
          <label class="lab" for="g">G:</label><input class="field" id="g" value="34,043 mm" />
          <button class="chain" aria-label="Oranları koru">${icon(16, 16, svg`<path d="M5.500 6.500V4.500a2.500 2.500 0 0 1 5 0V6.500M5.500 9.500v2a2.500 2.500 0 0 0 5 0V9.500" stroke="#ccc" stroke-width="1.800"/><path d="M1 4.500l2 1M0 8h3M1 11.500l2-1M15 4.500l-2 1M16 8h-3M15 11.500l-2-1" stroke="#aaa"/>`)}</button>
          <label class="lab c2" for="y">Y:</label><input class="field" id="y" value="91,458 mm" />
          <label class="lab" for="h">H:</label><input class="field" id="h" value="34,043 mm" />
          <label class="lab c2" for="a" aria-label="Döndür">${icon(11, 9, svg`<path d="M10 0L1 8H10zM6 4c1 1 2 2 2 4" stroke="#ccc"/>`)}:</label>
          <span class="pick"><select class="field" id="a"><option>0°</option></select><span class="cap">${downBig()}</span></span>
          <label class="lab" for="s" aria-label="Yamult">${icon(11, 9, svg`<path d="M1 8L6 .5H10L5 8zM3 8L8 .5" stroke="#ccc"/>`)}:</label>
          <span class="pick r"><select class="field" id="s"><option>0°</option></select><span class="cap">${downBig()}</span></span>
        </div>
        <div class="line"></div>
        <div class="tah empty">Şekil Özelliği Yok</div>
        <div class="line"></div>
        <div class="checks">${["Dikdörtgen Köşelerini Ölçekle", "Konturları ve Efektleri Ölçekle", "Piksel Izgarasına Hizala"].map((t) => html`<label class="tah check"><input type="checkbox" />${t}</label>`)}</div>
      </section>`;
  }
}

const F: Record<string, Shape> = {
  lib: svg`<path d="M1 2v11M4.500 2v11M8 3l4 10" stroke="${L}" stroke-width="2"/><path d="M13 10h5l-2.500 3z" fill="${L}"/>`,
  share: svg`<path d="M11 2.500L4 7.500L11 12.500" stroke="${L}" stroke-width="1.500"/><circle cx="11" cy="3" r="2" fill="${L}"/><circle cx="4" cy="7.500" r="2.600" fill="${L}"/><circle cx="11" cy="12" r="2" fill="${L}"/>`,
  cloud: svg`<path d="M1 12V2h5l1 2h6M1 12h3" stroke="${L}" stroke-width="1.200"/><circle cx="8" cy="9" r="3" stroke="${L}" stroke-width="1.300"/><circle cx="12" cy="9" r="3.500" stroke="${L}" stroke-width="1.300"/>`,
  kinds: svg`<path d="M1 2h9v9H1z" fill="${L}"/><path d="M4 2v9M7 2v9M1 5h9M1 8h9" stroke="#494949"/><path d="M11 10h5l-2.500 3z" fill="${L}"/>`,
  list: svg`<rect x="2.500" y="2.500" width="10" height="10" stroke="${L}"/><path d="M4 5h1M6 5h5M4 7.500h1M6 7.500h5M4 10h1M6 10h5" stroke="${L}"/>`,
  folder: svg`<path d="M2 3h5l1 2h6v8H2z" fill="${L}"/>`,
  fresh: svg`<path d="M3 3h10v10H9V9H5z" fill="${L}"/><path d="M5 9.500L9 13H5z" fill="#999"/>`,
  trash: svg`<path d="M2 4.500h11M5.500 4V2.500h4V4M3.500 5l.5 8h7l.5-8M6 6v6M9 6v6" stroke="${L}" stroke-width="1.200"/>`,
  trashOff: svg`<path d="M2 4.500h11M5.500 4V2.500h4V4M3.500 5l.5 8h7l.5-8M6 6v6M9 6v6" stroke="#6c6c6c" stroke-width="1.200"/>`,
  find: svg`<circle cx="9" cy="6" r="4" stroke="${L}" stroke-width="1.300"/><path d="M6 9L2 13" stroke="${L}" stroke-width="1.700"/>`,
  mask: svg`<rect x="3.500" y="3.500" width="9" height="9" stroke="${L}"/><rect x="6.500" y="6.500" width="5" height="5" fill="#888" stroke="${L}"/>`,
  sub: svg`<path d="M1 3.500h5V8h3M2 1.500l3 2-3 2" stroke="${L}" stroke-width="1.200"/><path d="M8 5h6v8H10V9H8z" fill="${L}"/>`,
};
const miniArt = (s: number) => html`<svg class="ico" width=${s} height=${s} viewBox="0 0 50 50" aria-hidden="true"><rect width="50" height="50" fill="#000"/><rect x="1.500" y="1.500" width="47" height="47" fill="#fff"/><path d="M2 2H17V34H34V2H48V48H2z" fill="${TEAL}"/></svg>`;

@customElement("dock-right")
class DockRight extends LitElement {
  static styles = [reset, fields, css`
    :host { display: flex; flex-direction: column; background: #494949; }
    .strip { height: 12px; flex: none; padding: 3px 5px; background: linear-gradient(#363636, #2c2c2c); display: flex; justify-content: flex-end; }
    .panel { flex: none; border-bottom: 3px solid #282828; }
    .color { height: 70px; padding: 8px 2px 1px 6px; }
    .basic { display: flex; width: 39px; border: 1px solid #222; margin-bottom: 11px; }
    .basic button { width: 13px; height: 12px; flex: 1; }
    .ramp { display: flex; align-items: flex-end; justify-content: space-between; }
    .spec { flex: 0 1 217px; height: 31px; border: 1px solid #222; background: linear-gradient(#fff 2%, rgba(255,255,255,0) 50%, rgba(0,0,0,0) 55%, #000 97%), linear-gradient(90deg, #e2131c, #f7e51d 17%, #6fb82a 34%, #3fae4a 42%, #38b6e6 54%, #2b3f96 67%, #6c2a8c 80%, #e5097f 94%, #e2131c); }
    .swatches { height: 110px; padding: 6px 2px 0 6px; }
    .head { display: flex; justify-content: space-between; height: 34px; padding-right: 5px; }
    .views { display: flex; height: 23px; border: 1px solid #2c2c2c; }
    .views button { width: 25px; background: #565656; }
    .views button + button { background: #2f2f2f; }
    .well { display: flex; justify-content: space-between; height: 51px; padding-right: 4px; }
    .grid { display: grid; grid-template-columns: repeat(15, 14px); grid-auto-rows: 14px; overflow: hidden; border-left: 1px solid #333; border-top: 1px solid #333; }
    .chip { width: 13px; height: 13px; }
    .pin { box-shadow: inset 0 0 0 1px #fff, inset 0 0 0 2px #111; }
    .bw { background: linear-gradient(90deg, #fff, #111); }
    .sun { background: linear-gradient(90deg, #ffe600, #e94e1b); }
    .sky { background: linear-gradient(90deg, #1d71b8, #cfe6f6); }
    .leaf { background: repeating-conic-gradient(#7ab51d 0 10%, #dcebb5 0 25%); }
    .sand { background: repeating-conic-gradient(#9a7b55 0 10%, #e7dccb 0 25%); }
    .dots { background: radial-gradient(circle at 6px 8px, #eee 5px, #111 6px); }
    .scroll { width: 14px; display: flex; flex-direction: column; align-items: center; justify-content: space-between; background: #333; padding: 5px 0 5px; }
    .scroll span { width: 12px; height: 12px; background: #8f8f8f; margin-bottom: 9px; }
    .tools { display: grid; grid-template-columns: repeat(8, 27px) 1fr; align-items: center; height: 18px; margin-top: 1px; }
    .tools > .ico { justify-self: end; }
    .blend { padding: 7px 8px 0 6px; height: 104px; }
    .brow { display: flex; align-items: center; height: 18px; margin-bottom: 7px; }
    .normal { width: 105px; }
    .normal select { height: 18px; padding-left: 6px; background: linear-gradient(#606060, #505050); border: 1px solid #2c2c2c; }
    .normal .cap { background: none; border-color: transparent; border-left-color: #333; }
    .ol { padding: 0 4px 0 7px; }
    .pct { width: 53px; padding: 0 2px; }
    .line { height: 1px; background: #3a3a3a; box-shadow: 0 1px #555; margin-bottom: 7px; }
    .masks { display: flex; justify-content: space-between; gap: 5px; }
    .thumbs { display: flex; justify-content: space-between; width: 132px; height: 56px; padding: 2px; border: 1px solid #333; }
    .nomask { width: 51px; height: 51px; border: 1px solid #999; }
    .opts { flex: 1; display: flex; flex-direction: column; }
    .make { height: 19px; background: linear-gradient(#626262, #505050); border: 1px solid #2c2c2c; margin-bottom: 4px; }
    .check { display: flex; align-items: center; height: 20px; gap: 4px; color: #808080; }
    .check input { appearance: none; width: 12px; height: 12px; border: 1px solid #353535; }
    .layers { flex: 1; display: flex; flex-direction: column; min-height: 0; }
    .list { flex: 1; margin: 6px 6px 0 5px; border: 1px solid #333; }
    .layer { display: grid; grid-template-columns: 21px 22px 4px 22px 20px 1fr 36px; align-items: center; height: 21px; background: #5b6575; border-bottom: 1px solid #333; }
    .layer > * { justify-self: center; }
    .layer .nm { justify-self: start; padding-left: 4px; }
    .layer .cell { align-self: stretch; justify-self: stretch; border-right: 1px solid #3c4450; }
    .tag { width: 4px; height: 18px; background: #5b83ee; }
    .layer .end { display: flex; gap: 7px; align-self: stretch; justify-self: stretch; align-items: center; border-left: 1px solid #3c4450; padding-left: 5px; }
    .foot { display: flex; align-items: center; justify-content: space-between; height: 18px; padding: 0 2px 0 5px; border-top: 1px solid #333; }
    .foot div { display: flex; align-items: center; gap: 11px; }
    .foot div .ico:last-child { margin-left: 4px; }
    .foot div button .ico:last-child { margin-left: 0; }
    .foot span { font: 600 10px/14px "Open Sans", sans-serif; text-shadow: none; }
  `];
  private swatch(c: string) {
    if (c === "none") return html`<button class="chip" aria-label="Yok">${icon(13, 13, svg`<rect width="13" height="13" fill="#fff"/><path d="M0 13L13 0" stroke="#d0161b" stroke-width="2"/>`)}</button>`;
    if (c === "reg") return html`<button class="chip" aria-label="Kayıt">${icon(13, 13, svg`<rect width="13" height="13" fill="#fff"/><circle cx="6.500" cy="6.500" r="4.500" stroke="#111"/><circle cx="6.500" cy="6.500" r="2" stroke="#111"/><path d="M6.500 0V13M0 6.500H13" stroke="#111"/>`)}</button>`;
    return c[0] === "#"
      ? html`<button class=${classMap({ chip: true, pin: c === TEAL })} style="background-color:${c}" aria-label=${c}></button>`
      : html`<button class="chip ${c}" aria-label="Desen"></button>`;
  }
  render() {
    const tool = (k: string, label: string) => html`<button aria-label=${label}>${icon(15, 15, F[k])}</button>`;
    return html`
      <div class="strip">${collapse("r")}</div>
      <section class="panel"><panel-tabs .names=${["Renk", "Renk Kılavuzu"]} arrow></panel-tabs>
        <div class="color">
          <div class="basic"><button aria-label="Yok">${icon(13, 12, svg`<rect width="13" height="12" fill="#fff"/><path d="M0 12L13 0" stroke="#d0161b" stroke-width="1.800"/>`)}</button><button style="background:#000" aria-label="Siyah"></button><button style="background:#fff" aria-label="Beyaz"></button></div>
          <div class="ramp"><div class="spec"></div>${resizer()}</div>
        </div>
      </section>
      <section class="panel"><panel-tabs .names=${["Renk Örnekleri"]}></panel-tabs>
        <div class="swatches">
          <div class="head"><button aria-label="Dolgu ve kontur">${icon(29, 34, svg`<rect x="10" y="10" width="19" height="20" fill="#222"/><rect x="11" y="11" width="17" height="18" fill="#fff"/><rect x="16" y="16" width="7" height="8" fill="#494949" stroke="#222"/><path d="M11 29L28 11" stroke="#d0161b" stroke-width="2"/><rect width="19" height="20" fill="#fff"/><rect x="1" y="1" width="17" height="18" fill="${TEAL}"/>`)}</button>
            <div class="views"><button aria-label="Liste">${icon(13, 14, svg`<path d="M0 1H13M0 5H13M0 9H13M0 13H13" stroke="#ddd" stroke-width="2"/>`)}</button><button aria-label="Küçük resimler">${icon(14, 14, svg`<path d="M0 0h4v4H0zM5 0h4v4H5zM10 0h4v4h-4zM0 5h4v4H0zM5 5h4v4H5zM10 5h4v4h-4zM0 10h4v4H0zM5 10h4v4H5zM10 10h4v4h-4z" fill="#ddd"/>`)}</button></div></div>
          <div class="well"><div class="grid">${swatches.map((c) => this.swatch(c))}</div><div class="scroll">${down4("u")}<span></span>${down4("d")}</div></div>
          <div class="tools">${tool("lib", "Kitaplıklar")}${tool("share", "Paylaş")}${tool("cloud", "Kitaplığa ekle")}${tool("kinds", "Türler")}${tool("list", "Seçenekler")}${tool("folder", "Yeni grup")}${tool("fresh", "Yeni renk örneği")}${tool("trash", "Sil")}${resizer()}</div>
        </div>
      </section>
      <section class="panel"><panel-tabs .names=${["Kontur", "Degrade", "Saydamlık"]} active="2" arrow></panel-tabs>
        <div class="blend tah">
          <div class="brow"><span class="pick normal"><select aria-label="Karıştırma modu"><option>Normal</option></select><span class="cap">${down()}</span></span>
            <label class="ol" for="op">Opaklık:</label><input class="field pct" id="op" value="100%" /><button class="dd" aria-label="Opaklık kaydırıcısı">${right()}</button></div>
          <div class="line"></div>
          <div class="masks"><div class="thumbs">${miniArt(51)}<button class="nomask" aria-label="Maske yok">${icon(25, 25, svg`<circle cx="12.500" cy="12.500" r="10.500" stroke="#b4b4b4" stroke-width="3.500"/><path d="M5 5L20 20" stroke="#b4b4b4" stroke-width="3.500"/>`)}</button></div>
            <div class="opts"><button class="make">Maske Yap</button>
              <label class="check"><input type="checkbox" disabled />Kes</label>
              <label class="check"><input type="checkbox" disabled />Mske Ters Çvr</label></div></div>
        </div>
      </section>
      <section class="panel"><panel-tabs .names=${["Kitaplıklar", "Görünüm", "Grafik Stilleri"]} nomenu></panel-tabs></section>
      <section class="layers"><panel-tabs .names=${["Katmanlar", "Çalışma Yüzeyleri"]}></panel-tabs>
        <div class="list"><div class="layer tah">
          <button class="cell" aria-label="Görünürlük">${icon(12, 8, svg`<path d="M.5 4.500C3 .5 9 .5 11.500 4.500C9 8 3 8 .5 4.500z" stroke="#ccc"/><circle cx="6" cy="4" r="2" fill="#ccc"/>`)}</button>
          <button class="cell" aria-label="Kilit"></button><span class="tag"></span>
          <button aria-label="Genişlet">${right()}</button>${miniArt(18)}<span class="nm">katman 1</span>
          <span class="end">${icon(9, 9, svg`<circle cx="4.500" cy="4.500" r="4" stroke="#ccc"/>`)}${icon(8, 8, svg`<rect x=".5" y=".5" width="7" height="7" fill="#5b83ee" stroke="#111"/>`)}</span>
        </div></div>
        <div class="foot tah"><span>1 Katman</span><div>${tool("find", "Bul")}${tool("mask", "Kırpma maskesi")}${tool("sub", "Yeni alt katman")}${tool("fresh", "Yeni katman")}${tool("trashOff", "Sil")}${resizer()}</div></div>
      </section>`;
  }
}

@customElement("app-root")
class AppRoot extends LitElement {
  static styles = [reset, css`
    :host { display: grid; grid-template: auto auto minmax(0, 1fr) / 74px minmax(0, 1fr) 236px 241px; height: 100vh; overflow: hidden; position: relative; background: #494949; }
    title-bar, control-bar { grid-column: 1 / -1; }
    title-bar { z-index: 2; }
    .cursor { position: absolute; z-index: 9; left: 650px; top: 197px; pointer-events: none; }
  `];
  render() {
    return html`<title-bar></title-bar><control-bar></control-bar>
      <tool-box></tool-box><document-view></document-view><dock-left></dock-left><dock-right></dock-right>
      <svg class="cursor" width="12" height="19" viewBox="0 0 12 19" aria-hidden="true"><path d="M.5 .8V16L4 12.800L6.500 18.300L9 17.200L6.500 12H11.300z" fill="#fff" stroke="#000"/></svg>`;
  }
}
